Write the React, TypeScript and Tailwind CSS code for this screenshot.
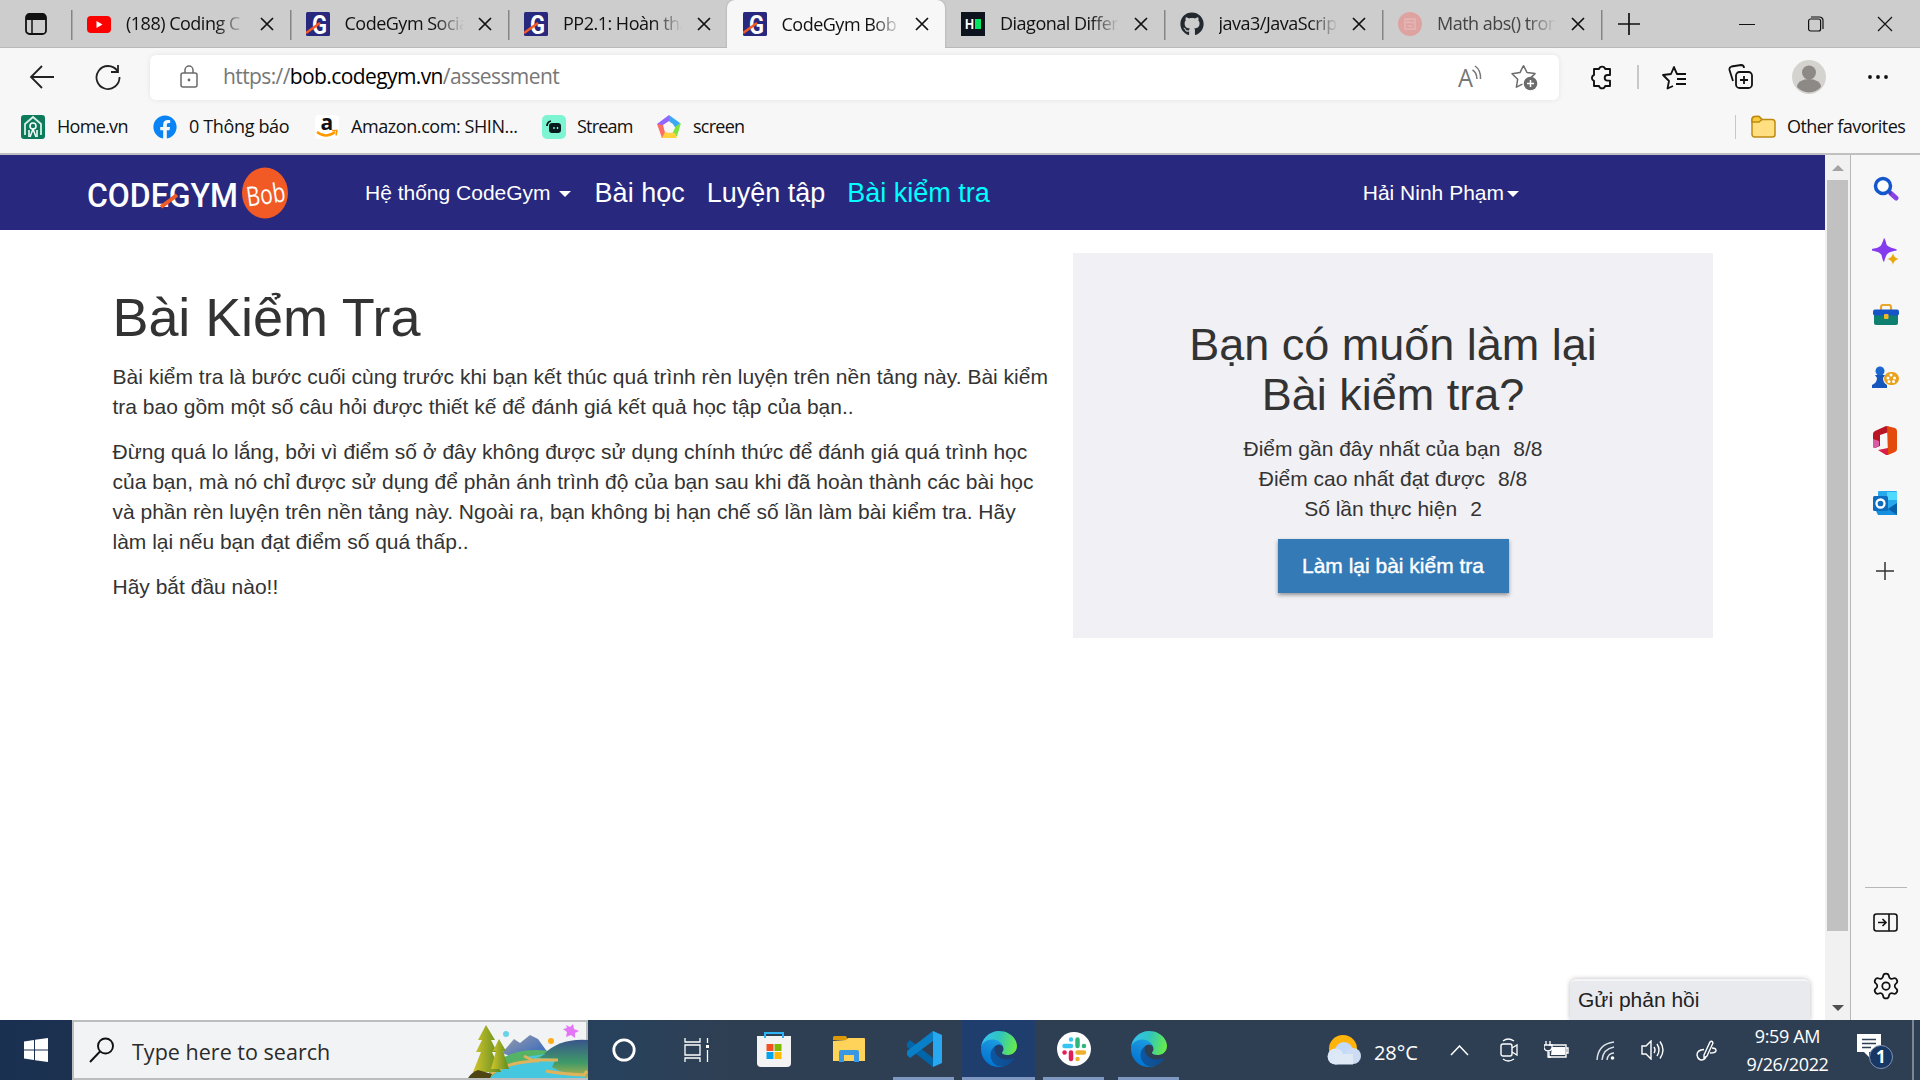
import React from "react";
import { Settings } from "lucide-react";
import { FaGithub, FaFacebook } from "react-icons/fa";

type P = { children?: React.ReactNode; w?: number; h?: number; vb?: string; className?: string };

function Icon({ children, w = 24, h = 24, vb, className = "" }: P) {
  return (
    <svg width={w} height={h} viewBox={vb ?? `0 0 ${w} ${h}`} fill="none" className={`block shrink-0 ${className}`}>
      {children}
    </svg>
  );
}

const Close = () => (
  <Icon w={14} h={14}><path d="M1 1L13 13M13 1L1 13" stroke="#111" strokeWidth="1.7" /></Icon>
);

const CodeGymIcon = () => (
  <Icon>
    <rect width="24" height="24" rx="1.5" fill="#28287e" />
    <text x="6" y="21.5" fontFamily="Roboto" fontWeight="700" fontSize="26" textLength="15" lengthAdjust="spacingAndGlyphs" fill="#fff">G</text>
    <path d="M0 21L14 11" stroke="#f15a24" strokeWidth="2.6" />
  </Icon>
);

const YouTube = () => (
  <Icon><rect y="4" width="24" height="17" rx="4" fill="#f00" /><path d="M9.5 9v7l6-3.5z" fill="#fff" /></Icon>
);

const HackerRank = () => (
  <Icon>
    <rect width="24" height="24" fill="#0e141e" />
    <text x="4" y="17" fontFamily="Liberation Sans" fontWeight="700" fontSize="14" textLength="9" lengthAdjust="spacingAndGlyphs" fill="#fff">H</text>
    <path d="M14 7h6v10h-6z" fill="#05e762" />
  </Icon>
);

const RedDot = () => (
  <Icon><circle cx="12" cy="12" r="12" fill="#dea3a0" /><path d="M7 7h10v10H7zM7 10.5h10M9.5 14h5M10 7v3" stroke="#e5b6b3" strokeWidth="1.5" /></Icon>
);

const tabs = [
  { icon: <YouTube />, title: "(188) Coding C" },
  { icon: <CodeGymIcon />, title: "CodeGym Socia" },
  { icon: <CodeGymIcon />, title: "PP2.1: Hoàn thà" },
  { icon: <CodeGymIcon />, title: "CodeGym Bob", active: true },
  { icon: <HackerRank />, title: "Diagonal Differ" },
  { icon: <FaGithub size={24} color="#24292f" />, title: "java3/JavaScrip" },
  { icon: <RedDot />, title: "Math abs() tron", faded: true },
];

function TabStrip() {
  return (
    <div className="flex h-12 items-stretch border-b border-[#b9b9b9] bg-[#cdcdcd]">
      <div className="flex w-[71px] items-center pl-[25px]">
        <Icon w={22} h={22}><rect x="1" y="1" width="20" height="20" rx="3.5" stroke="#111" strokeWidth="1.8" /><path d="M1 4.5a3.5 3.5 0 013.500-3.500h13a3.500 3.500 0 013.500 3.500V7H1z" fill="#111" /><path d="M7 7v14" stroke="#111" strokeWidth="1.5" /></Icon>
      </div>
      {tabs.map((t, i) => (
        <div key={i} className={`flex w-[218.500px] shrink-0 items-center pr-[16px] pl-[16px] ${t.active ? "-mb-px rounded-t-lg bg-[#f7f7f7] shadow-[0_0_2px_#999]" : i === 4 ? "" : "bg-[linear-gradient(#858585,#858585)] bg-[length:1.5px_30px] bg-[position:0_10px] bg-no-repeat"}`}>
          <span className="shrink-0">{t.icon}</span>
          <span className={`ml-[15px] w-[119px] overflow-hidden text-[18px] tracking-[-0.500px] whitespace-nowrap [mask-image:linear-gradient(90deg,#000_76%,transparent)] ${t.faded ? "text-[#444]" : "text-[#111]"}`}>{t.title}</span>
          <span className="ml-auto"><Close /></span>
        </div>
      ))}
      <div className="flex grow items-center bg-[linear-gradient(#858585,#858585)] bg-[length:1.5px_30px] bg-[position:0_10px] bg-no-repeat pl-[17px]">
        <Icon w={22} h={22}><path d="M11 0v22M0 11h22" stroke="#111" strokeWidth="1.7" /></Icon>
        <div className="mr-[27px] ml-auto flex items-center gap-[53px]">
          <Icon w={16} h={16}><path d="M0 8.500h16" stroke="#111" /></Icon>
          <Icon w={16} h={16}><rect x=".6" y="3" width="12" height="12" rx="2" stroke="#111" strokeWidth="1.200" /><path d="M3 1h8.500a3.500 3.500 0 013.500 3.500V13" stroke="#111" strokeWidth="1.200" /></Icon>
          <Icon w={16} h={16}><path d="M1 1l14 14M15 1L1 15" stroke="#111" strokeWidth="1.200" /></Icon>
        </div>
      </div>
    </div>
  );
}

function Toolbar() {
  return (
    <div className="flex h-[58px] items-center bg-[#f7f7f7]">
      <Icon w={26} h={24} className="ml-[29px]"><path d="M13 1L2 12l11 11M2 12h23" stroke="#222" strokeWidth="1.8" /></Icon>
      <Icon w={26} h={26} className="ml-10"><path d="M22.500 7A11.500 11.500 0 1024.500 13M23 1v7h-7" stroke="#222" strokeWidth="1.8" /></Icon>
      <div className="ml-[29px] flex h-[45px] w-[1409px] items-center rounded-md bg-white pl-[30px] shadow-[0_0_5px_#e3e3e3]">
        <Icon w={18} h={24}><rect x="1" y="8" width="16" height="14" rx="2" stroke="#6b6b6b" strokeWidth="1.500" /><path d="M5 8V5a4 4 0 018 0v3" stroke="#6b6b6b" strokeWidth="1.500" /><circle cx="9" cy="15" r="1.400" fill="#6b6b6b" /></Icon>
        <span className="ml-[25px] text-[21px] tracking-[-0.600px] whitespace-nowrap text-[#777]">https://<span className="text-black">bob.codegym.vn</span>/assessment</span>
        <Icon w={25} h={25} className="ml-auto"><text x="0" y="22" fontFamily="Open Sans" fontSize="26" fontWeight="400" textLength="15" lengthAdjust="spacingAndGlyphs" fill="#777">A</text><path d="M14.500 5q4 2 4.500 9M17 1q6 4 5.500 13" stroke="#777" strokeWidth="1.500" /></Icon>
        <Icon w={27} h={27} className="mr-[21px] ml-[28px]"><path d="M12.500 1.500l3.500 7 8 1.100-5.500 5.500M12.500 1.500L9 8.600l-8 1.100 5.700 5.500-1.300 8 6-3.100" stroke="#6b6b6b" strokeWidth="1.500" strokeLinejoin="round" /><circle cx="19.500" cy="19.500" r="6.800" fill="#6b6b6b" /><path d="M19.500 16v7M16 19.500h7" stroke="#fff" strokeWidth="1.500" /></Icon>
      </div>
      <Icon w={25} h={25} className="ml-[31px]"><path d="M4 4h5a3.200 3.200 0 016.200 0H20v6h-2.500a2.800 2.800 0 000 5.600H20V21h-4.800a3.200 3.200 0 01-6.200 0H4v-5a3.200 3.200 0 010-6z" stroke="#111" strokeWidth="1.900" strokeLinejoin="round" /></Icon>
      <div className="ml-[22px] h-6 w-[1.500px] bg-[#c8c8c8]" />
      <Icon w={25} h={25} className="ml-[23px]"><path d="M15 9l-3-7-3 7-8 1 6 6-1.500 7.500L11 21M11.500 1.500L15 9h9M15 14h9M14 19h10" stroke="#111" strokeWidth="1.800" strokeLinejoin="round" /></Icon>
      <Icon w={25} h={26} className="ml-[41px]"><rect x="8" y="8" width="16" height="16" rx="3.500" stroke="#111" strokeWidth="1.800" /><path d="M16 12v8M12 16h8M5 17L1.500 6a3 3 0 012-3.500L13 1a3 3 0 013 3" stroke="#111" strokeWidth="1.800" /></Icon>
      <Icon w={34} h={34} className="ml-[39px]"><circle cx="17" cy="17" r="17" fill="#d5d3d0" /><circle cx="17" cy="12.500" r="7" fill="#8d8986" /><path d="M5 27a12 8 0 0124 0 16 16 0 01-24 0" fill="#8d8986" /></Icon>
      <Icon w={22} h={6} className="ml-[41px]"><circle cx="3" cy="3" r="1.900" fill="#111" /><circle cx="11" cy="3" r="1.900" fill="#111" /><circle cx="19" cy="3" r="1.900" fill="#111" /></Icon>
    </div>
  );
}

const HomeIcon = () => (
  <Icon><rect width="24" height="24" rx="3" fill="#0c7a5b" /><path d="M4 20V9l8-7 8 7v11M8 22v-7M16 22v-7" stroke="#d8f0e8" strokeWidth="1.800" /><circle cx="12" cy="11" r="3" stroke="#fff" strokeWidth="1.600" /><path d="M12 14l-3 8M12 14l3 8" stroke="#fff" strokeWidth="1.500" /></Icon>
);
const AmazonIcon = () => (
  <Icon><rect width="24" height="24" rx="4" fill="#fff" /><text x="5.500" y="15" fontFamily="Open Sans" fontWeight="700" fontSize="21" fill="#111">a</text><path d="M2 17q9 7 18 0" stroke="#f90" strokeWidth="2.300" /><path d="M17 15.500h5l-1 5" stroke="#f90" strokeWidth="1.500" /></Icon>
);
const StreamIcon = () => (
  <Icon><rect width="24" height="24" rx="5" fill="#7ef5d2" /><rect x="7" y="8" width="12" height="10" rx="3" fill="#07191d" /><path d="M5 11q0-4 4-5" stroke="#07191d" strokeWidth="1.800" /><path d="M12 12v2M15.500 12v2" stroke="#7ef5d2" strokeWidth="1.400" /></Icon>
);
const ScreenIcon = () => (
  <Icon><path d="M12 0L0 9l3 3 9-6z" fill="#9166ff" /><path d="M12 0l11 8-3 6-8-8z" fill="#3aa9f5" /><path d="M24 8l-4 13h-6l5-10z" fill="#7be53c" /><path d="M20 23H4l4-6 10 1z" fill="#ffd23e" /><path d="M0 9l5 14 3-6-2-7z" fill="#ff6f61" /><circle cx="12" cy="12.500" r="5.200" fill="#f7f7f7" /></Icon>
);

function Bookmarks() {
  return (
    <div className="flex h-[49px] items-center border-b-2 border-[#c0c0c0] bg-[#f7f7f7] pb-[6px] pl-[21px] text-[18px] leading-[24px] whitespace-nowrap text-[#111]">
      <HomeIcon /><span className="-mt-0.5 ml-[12px] w-[96px] tracking-[-0.700px]">Home.vn</span>
      <FaFacebook size={24} color="#0a83f5" className="shrink-0" /><span className="-mt-0.5 ml-[12px] w-[126px] tracking-[-0.350px]">0 Thông báo</span>
      <AmazonIcon /><span className="-mt-0.5 ml-[12px] w-[191px] tracking-[-0.420px]">Amazon.com: SHIN...</span>
      <StreamIcon /><span className="-mt-0.5 ml-[11px] w-[80px] tracking-[-0.800px]">Stream</span>
      <ScreenIcon /><span className="-mt-0.5 ml-[12px] tracking-[-0.750px]">screen</span>
      <div className="ml-auto flex items-center border-l border-[#c8c8c8] pl-[15px]">
        <Icon w={25} h={24}><path d="M1 4.500a3 3 0 013-3h4l3 3h10a3 3 0 013 3v12a2.500 2.500 0 01-2.500 2.500h-18A2.500 2.500 0 011 19.500z" fill="#ffdf80" stroke="#bd8a10" strokeWidth="1.500" /><path d="M1 7h7l3-2.500-3-3H4a3 3 0 00-3 3z" fill="#f8cc3c" stroke="#bd8a10" strokeWidth="1.500" /></Icon>
        <span className="-mt-0.5 ml-[11px] w-[133px] tracking-[-0.550px]">Other favorites</span>
      </div>
    </div>
  );
}

function SiteHeader() {
  return (
    <header className="flex h-[75px] shrink-0 items-center bg-[#28287e] font-['Liberation_Sans',sans-serif] whitespace-nowrap text-white">
      <Icon w={204} h={56} className="ml-[87px]">
        <text x="0" y="42" fontFamily="Roboto" fontWeight="500" fontSize="34" textLength="151" lengthAdjust="spacingAndGlyphs" fill="#fff">CODEGYM</text>
        <path d="M74 42L90 30" stroke="#f15a24" strokeWidth="4" />
        <ellipse cx="178" cy="28" rx="23" ry="25.500" fill="#f15a24" />
        <text x="159" y="39" transform="rotate(-8 178 28)" fontFamily="Open Sans" fontWeight="400" fontSize="27" textLength="39" lengthAdjust="spacingAndGlyphs" fill="#fff">Bob</text>
      </Icon>
      <span className="ml-[74px] text-[21px]">Hệ thống CodeGym</span>
      <Icon w={12} h={6} className="mt-[3px] ml-[8px]"><path d="M0 0h12L6 6z" fill="#fff" /></Icon>
      <nav className="mt-px ml-[24px] flex gap-[22px] text-[27px]">
        <span>Bài học</span><span>Luyện tập</span><span className="text-[#00ffff]">Bài kiểm tra</span>
      </nav>
      <div className="mr-[306px] ml-auto flex items-center text-[21px]">
        <span>Hải Ninh Phạm</span>
        <Icon w={12} h={6} className="mt-[3px] ml-[3px]"><path d="M0 0h12L6 6z" fill="#fff" /></Icon>
      </div>
    </header>
  );
}

function Page() {
  return (
    <div className="flex w-[1825px] flex-col overflow-hidden bg-white">
      <SiteHeader />
      <main className="flex grow items-start font-['Liberation_Sans',sans-serif] text-[21px] leading-[30px] text-[#333]">
        <section className="w-[1073px] shrink-0 pt-[57px] pl-[112.500px] whitespace-nowrap">
          <h1 className="mb-[15px] text-[54px] leading-[60px] tracking-[-0.100px]">Bài Kiểm Tra</h1>
          <p className="mb-[15px]">Bài kiểm tra là bước cuối cùng trước khi bạn kết thúc quá trình rèn luyện trên nền tảng này. Bài kiểm<br />tra bao gồm một số câu hỏi được thiết kế để đánh giá kết quả học tập của bạn..</p>
          <p className="mb-[15px]">Đừng quá lo lắng, bởi vì điểm số ở đây không được sử dụng chính thức để đánh giá quá trình học<br />của bạn, mà nó chỉ được sử dụng để phản ánh trình độ của bạn sau khi đã hoàn thành các bài học<br />và phần rèn luyện trên nền tảng này. Ngoài ra, bạn không bị hạn chế số lần làm bài kiểm tra. Hãy<br />làm lại nếu bạn đạt điểm số quá thấp..</p>
          <p>Hãy bắt đầu nào!!</p>
        </section>
        <aside className="mt-[23px] flex h-[385px] w-[640px] shrink-0 flex-col items-center bg-[#f0f0f5] pt-[67px] text-center">
          <h2 className="mb-[14px] text-[45px] leading-[50px]">Bạn có muốn làm lại<br />Bài kiểm tra?</h2>
          <div className="flex gap-[13px]"><span>Điểm gần đây nhất của bạn</span><span>8/8</span></div>
          <div className="flex gap-[13px]"><span>Điểm cao nhất đạt được</span><span>8/8</span></div>
          <div className="flex gap-[13px]"><span>Số lần thực hiện</span><span>2</span></div>
          <button className="mt-[15px] h-[54px] w-[231px] bg-[#337ab7] text-[21px] whitespace-nowrap text-white shadow-[0_2px_4px_rgba(0,0,0,0.4)] [-webkit-text-stroke:0.400px_white]">Làm lại bài kiểm tra</button>
        </aside>
      </main>
      <div className="mr-[15px] h-[41px] w-[240px] shrink-0 self-end rounded-t-md border-t-2 border-[#f5f5f7] bg-[#e9eaee] pt-[4px] pl-[8px] font-['Liberation_Sans',sans-serif] text-[21px] leading-[30px] text-[#222] shadow-[0_0_5px_#bbb]">Gửi phản hồi</div>
    </div>
  );
}

function Scrollbar() {
  return (
    <div className="flex w-[26px] flex-col items-center border-r border-[#b8b8b8] bg-[#f1f1f1]">
      <Icon w={12} h={6} className="mt-[10px]"><path d="M0 6h12L6 0z" fill="#a3a3a3" /></Icon>
      <div className="mt-[9px] h-[751px] w-[21px] bg-[#c1c1c1]" />
      <Icon w={12} h={6} className="mt-auto mb-[9px]"><path d="M0 0h12L6 6z" fill="#505050" /></Icon>
    </div>
  );
}

function Sidebar() {
  return (
    <div className="flex w-[69px] flex-col items-center bg-[#f7f7f7] pt-[2px]">
      <div className="flex h-[63px] items-center"><Icon w={26} h={26}><path d="M18 17.500l5 4.500" stroke="#8a42e6" strokeWidth="5" strokeLinecap="round" /><path d="M14 14l4 4" stroke="#4b3fb8" strokeWidth="2.500" /><circle cx="10" cy="10" r="7.500" fill="#fff" stroke="#1457cd" strokeWidth="3.500" /></Icon></div>
      <div className="flex h-[63px] items-center"><Icon w={27} h={27}><path d="M12 0q1 0 2.500 6.500Q16 9 22 10.500t0 2.500q-6 1-7.500 4T12 24q-1 0-2.500-7-1.500-3-7.500-4t0-2.500q6-1 7.500-4T12 0z" fill="#843bee" /><path d="M21 15q1 5 6 6-5 1-6 6-1-5-6-6 5-1 6-6z" fill="#e8a80a" stroke="#f7f7f7" strokeWidth=".4" /></Icon></div>
      <div className="flex h-[63px] items-center"><Icon w={26} h={22}><path d="M8 7V3a2 2 0 012-2h6a2 2 0 012 2v4" stroke="#e9a82c" strokeWidth="2.200" /><rect x="1" y="9" width="24" height="12" rx="2" fill="#0f806f" /><rect y="5.500" width="26" height="6" rx="2" fill="#1555c8" /><rect x="11" y="10" width="4.500" height="5" rx="1" fill="#f1b62a" /></Icon></div>
      <div className="flex h-[63px] items-center"><Icon w={27} h={24}><rect x="12" y="6" width="15" height="13" rx="6.500" fill="#e9a21b" /><g fill="#fff"><circle cx="19" cy="9" r="1.500" /><circle cx="22.500" cy="12" r="1.500" /><circle cx="16" cy="12" r="1.500" /><circle cx="17" cy="15.500" r="1.500" /><circle cx="21.500" cy="15.500" r="1.500" /></g><circle cx="8" cy="5" r="4.500" fill="#1b67cf" /><path d="M3 9h10l-2 3q0 5 4 7v3H0v-3q5-2 5-7z" fill="#1557bd" /></Icon></div>
      <div className="flex h-[63px] items-center"><Icon w={25} h={29}><path d="M0 8q0-2 2-3L13 0l3 1v5L7 9v11l-5 2q-2 0-2-2z" fill="#b91525" /><path d="M0 13l6 2v5l-4 2q-2 0-2-2z" fill="#da5aa5" /><path d="M14 0l8 2q2 1 2 3v18q0 2-2 3l-7 3z" fill="#e34a0b" /><path d="M5 24l10-2v7h-2z" fill="#d91f46" /></Icon></div>
      <div className="flex h-[63px] items-center"><Icon w={25} h={25}><rect x="5" width="19" height="18" rx="1" fill="#28a8ea" /><path d="M14 1h10v8H14z" fill="#50d9ff" /><path d="M3 20l12-2 9-6v12H5z" fill="#1490df" /><path d="M24 12l-9 6 9 6z" fill="#0a5fa9" /><rect y="5" width="15" height="15" rx="1.500" fill="#0f6cbd" /><circle cx="7.500" cy="12.500" r="4" stroke="#fff" strokeWidth="2.300" /></Icon></div>
      <Icon w={18} h={18} className="mt-[27px] mr-px"><path d="M9 0v18M0 9h18" stroke="#333" strokeWidth="1.500" /></Icon>
      <div className="mt-auto mb-[25px] h-px w-[42px] bg-[#b8b8b8]" />
      <Icon w={25} h={19}><rect x="1" y="1" width="23" height="17" rx="2.500" stroke="#111" strokeWidth="1.600" /><path d="M16 1v17M5 9.500h8M9.500 6l3.500 3.500L9.500 13" stroke="#111" strokeWidth="1.600" /></Icon>
      <Settings size={30} strokeWidth={1.400} color="#111" className="mt-[39px] mb-[19px] shrink-0" />
    </div>
  );
}

function EdgeLogo() {
  return (
    <Icon w={36} h={36} vb="0 0 256 256">
      <defs>
        <linearGradient id="edgeDark" x1="60" y1="170" x2="240" y2="170" gradientUnits="userSpaceOnUse"><stop stopColor="#0c59a4" /><stop offset="1" stopColor="#114a8b" /></linearGradient>
        <linearGradient id="edgeBlue" x1="120" y1="70" x2="50" y2="230" gradientUnits="userSpaceOnUse"><stop stopColor="#1b9de2" /><stop offset=".5" stopColor="#1285d8" /><stop offset="1" stopColor="#0078d4" /></linearGradient>
        <linearGradient id="edgeGreen" x1="10" y1="60" x2="240" y2="130" gradientUnits="userSpaceOnUse"><stop stopColor="#35c1f1" /><stop offset=".45" stopColor="#2fc4c0" /><stop offset="1" stopColor="#66eb4b" /></linearGradient>
      </defs>
      <path d="M231.300 190.500c-3.400 1.800-6.900 3.400-10.500 4.700-11.500 4.300-23.600 6.500-35.900 6.500-47.300 0-88.500-32.500-88.500-74.300.1-11.400 6.400-21.900 16.400-27.300-42.800 1.800-53.800 46.400-53.800 72.500 0 73.900 68.100 81.400 82.800 81.400 7.900 0 19.800-2.300 27-4.600l1.300-.4c27.600-9.500 51-28.100 66.600-52.800 1.200-1.900.6-4.300-1.200-5.500-1.300-.8-2.900-.9-4.200-.2z" fill="url(#edgeDark)" />
      <path d="M105.700 241.400c-8.900-5.500-16.600-12.800-22.700-21.300-26.300-36-18.400-86.500 17.600-112.800 3.800-2.700 7.700-5.200 11.900-7.200 3.100-1.500 8.400-4.100 15.500-4 10.100.1 19.600 4.900 25.700 13 4 5.400 6.300 11.900 6.400 18.700 0-.2 24.500-79.600-80-79.600-43.900 0-80 41.700-80 78.200-.2 19.300 4 38.500 12.100 56 27.600 58.800 94.800 87.600 156.400 67.100-21.100 6.600-44.100 3.700-62.900-8.100z" fill="url(#edgeBlue)" />
      <path d="M152.300 148.900c-.8 1-3.300 2.500-3.300 5.700 0 2.600 1.700 5.100 4.700 7.200 14.400 10 41.500 8.700 41.600 8.700 10.700 0 21.100-2.900 30.300-8.300 18.800-11 30.400-31.100 30.400-52.900.3-22.400-8-37.300-11.300-43.900C223.500 23.900 177.700 0 128 0 58 0 1 56.200 0 126.200c.5-36.500 36.800-66 80-66 3.500 0 23.500.3 42 10.100 16.300 8.600 24.900 18.900 30.800 29.200 6.200 10.700 7.300 24.100 7.300 29.500 0 5.300-2.700 13.300-7.800 19.900z" fill="url(#edgeGreen)" />
    </Icon>
  );
}

function Landscape() {
  return (
    <Icon w={120} h={56}>
      <defs>
        <linearGradient id="tree" x1="0" y1="0" x2="1" y2="0"><stop stopColor="#d3c52c" /><stop offset="1" stopColor="#5d8b1f" /></linearGradient>
        <linearGradient id="mount" x1="0" y1="0" x2="1" y2="1"><stop stopColor="#9c9fa8" /><stop offset="1" stopColor="#245fc5" /></linearGradient>
        <linearGradient id="hill" x1="0" y1="0" x2="0" y2="1"><stop stopColor="#38548a" /><stop offset=".6" stopColor="#3f9a68" /><stop offset="1" stopColor="#b5b34a" /></linearGradient>
      </defs>
      <path d="M34 31l12-14 6 4 10-8 8 4 10 14-24 8z" fill="url(#mount)" />
      <path d="M22 46Q42 24 82 29l-10 14-30 13H20z" fill="#54b366" />
      <path d="M76 32Q92 16 120 18v38H90l-18-20z" fill="url(#hill)" />
      <path d="M22 56q14-14 42-17l-8-4 22-3-10 4 20 1-4 8q12 8 34 8v3z" fill="#45c7df" />
      <path d="M22 53q14-12 44-14l-10-5M66 38h24M78 49q16 3 38 4l3-4" stroke="#dfb35c" strokeWidth="3" />
      <path d="M18 3L10 18h4L8 30h5L5 50h28L24 30h5l-6-12h4z" fill="url(#tree)" />
      <path d="M31 17l-6 12h3l-5 18h18l-6-18h3z" fill="url(#tree)" />
      <path d="M0 56q4-6 10-8l14 4-2 4z" fill="#4d4514" />
      <circle cx="38" cy="12" r="3" fill="#66d3e8" /><circle cx="83" cy="19" r="3" fill="#ffae13" />
      <path d="M98 3l4 2 3-3 1 5 5 2-4 2v5l-4-3-5 2 1-5-4-3 4-1z" fill="#e575f7" />
    </Icon>
  );
}

function AppSlot({ children, open, active }: { children: React.ReactNode; open?: boolean; active?: boolean }) {
  return (
    <div className={`flex h-full w-[75px] flex-col items-center ${active ? "bg-[#1f3d6d] bg-[length:73px_60px] bg-clip-content px-px" : "px-px"}`}>
      <div className="flex grow items-center">{children}</div>
      <div className={`h-[3px] ${active ? "w-[73px]" : "w-[61px]"} ${open ? "bg-[#7e98c2]" : ""}`} />
    </div>
  );
}

function Taskbar() {
  return (
    <footer className="flex h-[60px] shrink-0 items-center bg-[linear-gradient(90deg,#1a3050_0%,#1c3150_4%,#28415c_32%,#2f3f53_38%,#2f3f53_100%)] whitespace-nowrap text-white">
      <div className="flex w-[72px] justify-center"><Icon w={24} h={24}><path d="M0 3.500L10 2v9.500H0zM11 1.800L24 0v11.500H11zM0 12.500h10V22L0 20.500zM11 12.500h13V24l-13-1.800z" fill="#fff" /></Icon></div>
      <div className="flex h-[60px] w-[516px] items-center border-2 border-[#bcbdbf] bg-[#f1f3f5]">
        <Icon w={26} h={26} className="ml-[15px]"><circle cx="16.500" cy="9" r="7.500" stroke="#111" strokeWidth="1.900" /><path d="M11 14.500L1 25" stroke="#111" strokeWidth="1.900" /></Icon>
        <span className="mt-[4px] ml-[17px] text-[21.500px] tracking-[0.020px] text-[#2b2b2b]">Type here to search</span>
        <span className="-mr-0.5 ml-auto"><Landscape /></span>
      </div>
      <div className="flex w-[72px] justify-center"><Icon w={24} h={24}><circle cx="12" cy="12" r="10.200" stroke="#fff" strokeWidth="2.800" /></Icon></div>
      <div className="flex w-[73px] justify-center"><Icon w={26} h={24}><path d="M1 0v4h15V0M1 7h15v10H1zM1 24v-4h15v4M23.500 0v5M23.500 12v12" stroke="#fff" strokeWidth="1.300" /><path d="M22 7h3v3h-3z" fill="#fff" /></Icon></div>
      <div className="flex h-full pl-[3px]">
        <AppSlot><Icon w={36} h={36}><path d="M1 5h34v27a4 4 0 01-4 4H5a4 4 0 01-4-4z" fill="#f3f3f3" /><path d="M9 7V2h18v5" stroke="#2eb5f5" strokeWidth="2" /><path d="M10.500 13h7v7h-7z" fill="#f25022" /><path d="M18.500 13h7v7h-7z" fill="#7fba00" /><path d="M10.500 21h7v7h-7z" fill="#00a4ef" /><path d="M18.500 21h7v7h-7z" fill="#ffb900" /></Icon></AppSlot>
        <AppSlot><Icon w={32} h={26}><path d="M0 1.500A1.500 1.500 0 011.500 0H13l2 4H0z" fill="#dc9a08" /><path d="M0 5l13-1 2-2h16a1 1 0 011 1v22H0z" fill="#ffd35a" /><path d="M6 26V16a2 2 0 012-2h16a2 2 0 012 2v10h-5v-7H11v7z" fill="#3898e4" /></Icon></AppSlot>
        <AppSlot open><Icon w={36} h={36}><path d="M1 12l3-3L27 27v9L1 16z" fill="#0065a9" /><path d="M1 24l3 3L27 10V0L1 20z" fill="#087fc6" /><path d="M27 0l9 4v28l-9 4z" fill="#29a8f2" /></Icon></AppSlot>
        <AppSlot open active><EdgeLogo /></AppSlot>
        <AppSlot open><Icon w={34} h={34}><circle cx="17" cy="17" r="17" fill="#fff" /><g strokeWidth="4.500" strokeLinecap="round"><path d="M14 7.500v.1M7.500 14H14" stroke="#36c5f0" /><path d="M20.500 7.500V14M27 14h-.1" stroke="#2eb67d" /><path d="M20.500 20.500H27M20.500 27v-.1" stroke="#ecb22e" /><path d="M14 20.500V27M7.500 20.500h.1" stroke="#e01e5a" /></g></Icon></AppSlot>
        <AppSlot open><EdgeLogo /></AppSlot>
      </div>
      <div className="ml-auto flex h-full items-center">
        <Icon w={35} h={30}><circle cx="16" cy="14" r="14" fill="#ffb40b" /><circle cx="17" cy="16" r="9" fill="#c3dafa" /><circle cx="8.500" cy="21.500" r="8" fill="#dce7f7" /><circle cx="26" cy="21" r="8" fill="#cddcf3" /><path d="M8 19h18v10.500H8z" fill="#dfe8f5" /></Icon>
        <span className="mt-[5px] ml-[12px] w-[45px] text-[20px] tracking-[-0.100px]">28°C</span>
        <Icon w={19} h={11} className="ml-[31px]"><path d="M1 10l8.500-9L18 10" stroke="#fff" strokeWidth="1.500" /></Icon>
        <Icon w={18} h={24} className="ml-[31px]"><rect x="1" y="6" width="11" height="12" rx="2" stroke="#fff" strokeWidth="1.400" /><path d="M12 10l5-3v10l-5-3M3 3q5-4 11 0M3 21q5 4 11 0" stroke="#fff" strokeWidth="1.300" /></Icon>
        <Icon w={25} h={18} className="ml-[26px]"><path d="M5 4h17v12H5v-5M22 7h2v5h-2" stroke="#fff" strokeWidth="1.400" /><path d="M8 6h13v8H7z" fill="#fff" /><path d="M2 0v4M6 0v4M0 4h8v3q-1 3-4 3t-4-3zM4 10v6h3" stroke="#fff" strokeWidth="1.300" /></Icon>
        <Icon w={19} h={19} className="ml-[27px]"><path d="M1 19Q2 3 18 1M6 19Q7 8 18 6M11 19q1-7 7-7" stroke="#dce2e8" strokeWidth="1.400" /><circle cx="16.500" cy="17" r="1.800" fill="#fff" /></Icon>
        <Icon w={24} h={20} className="ml-[26px]"><path d="M1 6h4l5-5v18l-5-5H1z" stroke="#fff" strokeWidth="1.400" /><path d="M13 7q2 3 0 6M16 4q4 6 0 12M19 1.500q6 8.500 0 17" stroke="#fff" strokeWidth="1.400" /></Icon>
        <Icon w={21} h={21} className="ml-[31px]"><path d="M8 15L14 2q2-2 3 1l-6 13-3 2zM8 9.500Q1 10 1 15q1 5 5 5 4-1 4-4M16 8q4 0 4 2.500T14 13" stroke="#fff" strokeWidth="1.400" /></Icon>
        <div className="ml-[24px] w-[93px] text-center text-[18px] leading-[28px] tracking-[-0.350px]"><div>9:59 AM</div><div>9/26/2022</div></div>
        <div className="relative mt-[2px] ml-[23px] h-[40px] w-[38px]">
          <Icon w={38} h={42}><path d="M0 3h24v18H12v5L7 21H0z" fill="#fff" /><path d="M5 8.500h14M5 12.500h14M5 16.500h9" stroke="#2f3f53" strokeWidth="1.300" /><circle cx="24" cy="26" r="11.500" fill="#183764" stroke="#8093b4" /></Icon>
          <span className="absolute top-[14px] left-[19px] text-[17px] leading-6 font-bold">1</span>
        </div>
        <div className="ml-[17px] h-full w-[2px] bg-[#7d8793]" />
        <div className="w-[6px]" />
      </div>
    </footer>
  );
}

export default function App() {
  return (
    <div className="flex h-[1080px] w-[1920px] flex-col overflow-hidden bg-white font-['Open_Sans','Noto_Sans',sans-serif]">
      <TabStrip />
      <Toolbar />
      <Bookmarks />
      <div className="flex h-[865px] shrink-0">
        <Page />
        <Scrollbar />
        <Sidebar />
      </div>
      <Taskbar />
    </div>
  );
}
